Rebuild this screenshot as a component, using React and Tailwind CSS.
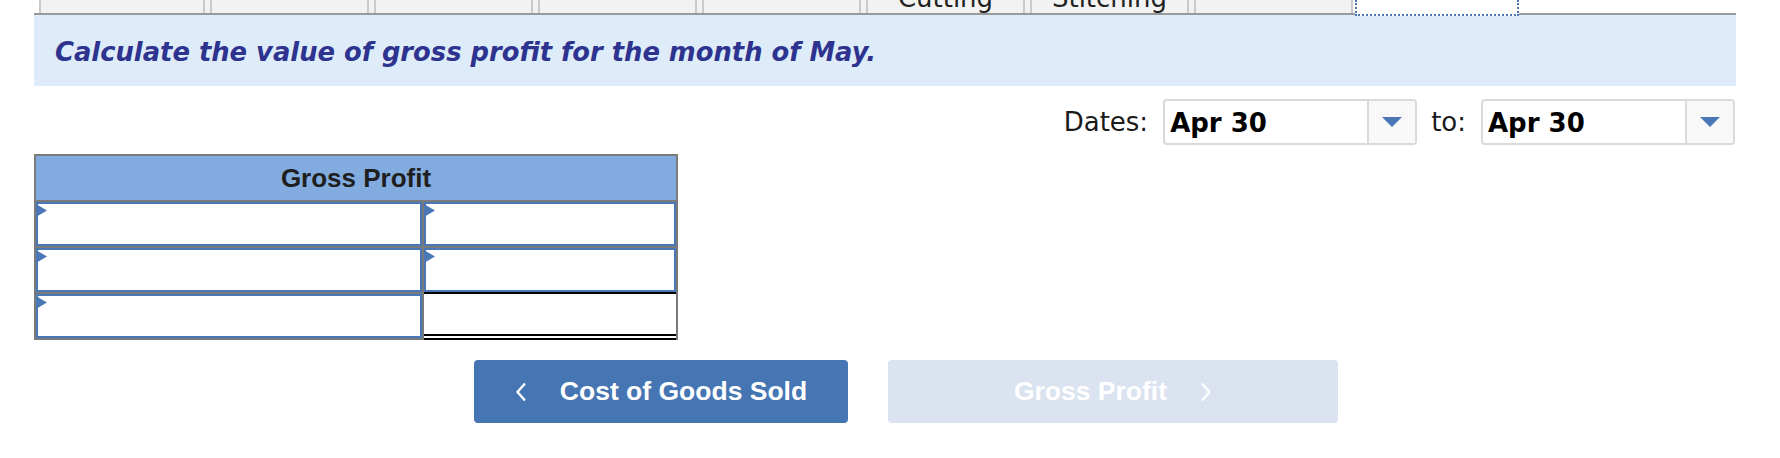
const blueTri = (
  <svg width="11" height="13" viewBox="0 0 11 13" className="absolute -left-[2px] top-0">
    <polygon points="0,0 11,6.5 0,13" fill="#4a78b6" />
  </svg>
);

function InputCell() {
  return (
    <div className="relative bg-white border-2 border-[#4a78b6] h-[44px]">
      {blueTri}
    </div>
  );
}

function Dropdown({ value }) {
  return (
    <div className="flex w-[254px] h-[46px] border-2 border-[#dadada] rounded-[4px] bg-white overflow-hidden">
      <div className="flex-1 flex items-center pl-[5px] pt-[2px] font-['DejaVu_Sans',sans-serif] font-bold text-[26px] text-black">
        {value}
      </div>
      <div className="w-[48px] flex items-center justify-center bg-[#f8f8f8] border-l-2 border-[#dadada]">
        <svg width="20" height="10" viewBox="0 0 20 10">
          <polygon points="0,0 20,0 10,10" fill="#4a78b6" />
        </svg>
      </div>
    </div>
  );
}

export default function App() {
  const tabs = ["", "", "", "", "", "Cutting", "Stitching", ""];

  return (
    <div className="w-[1780px] h-[458px] bg-white">
      <div className="ml-[34px] w-[1702px]">
        {/* Tab strip */}
        <div className="flex h-[15px] border-b-2 border-[#999]">
          <div className="flex gap-[5px] ml-[5px] bg-[#f2f2f2] h-[13px]">
            {tabs.map((t, i) => (
              <div
                key={i}
                className={`${i === 0 ? "w-[166px]" : "w-[159px]"} h-[13px] overflow-hidden border-x-2 border-[#cacaca] flex justify-center`}
              >
                <span className="-mt-[15px] leading-none font-['DejaVu_Sans',sans-serif] text-[26px] text-[#222] whitespace-nowrap">
                  {t}
                </span>
              </div>
            ))}
          </div>
          <div className="relative z-10 ml-[2px] w-[164px] h-[16px] bg-white border-x-2 border-b-2 border-dotted border-[#4a78b6]" />
        </div>

        {/* Instruction banner */}
        <div className="h-[71px] bg-[#deebf8] flex items-center pl-[21px] pt-[3px]">
          <p className="font-['DejaVu_Sans',sans-serif] font-bold italic text-[25.8px] text-[#2d338f]">
            Calculate the value of gross profit for the month of May.
          </p>
        </div>

        {/* Dates */}
        <div className="mt-[13px] flex items-center justify-end pr-[1px] font-['DejaVu_Sans',sans-serif] text-[26px] text-[#1a1a1a]">
          <span className="mr-[15px]">Dates:</span>
          <Dropdown value="Apr 30" />
          <span className="ml-[14px] mr-[15px]">to:</span>
          <Dropdown value="Apr 30" />
        </div>

        {/* Gross profit table */}
        <div className="mt-[9px] w-[644px] grid grid-cols-[386px_252px] gap-[2px] p-[2px] bg-[#7a7a7a]">
          <div className="col-span-2 h-[44px] bg-[#82acdf] flex items-center justify-center font-['Liberation_Sans',Arial,sans-serif] font-bold text-[26px] text-[#1f1f1f]">
            Gross Profit
          </div>
          <InputCell />
          <InputCell />
          <InputCell />
          <InputCell />
          <InputCell />
          <div className="-mt-[2px] -mb-[2px] h-[48px] bg-white border-t-2 border-b-[6px] border-double border-black" />
        </div>

        {/* Navigation buttons */}
        <div className="mt-[20px] ml-[440px] flex gap-[40px] font-['Liberation_Sans',Arial,sans-serif] font-bold text-[26.5px] text-white">
          <button className="w-[374px] h-[63px] rounded-[4px] bg-[#4675b3] flex items-center justify-center gap-[33px]">
            <svg width="12" height="20" viewBox="0 0 12 20">
              <path d="M10 1.5 L2.5 10 L10 18.5" stroke="white" strokeWidth="2.4" fill="none" />
            </svg>
            <span>Cost of Goods Sold</span>
          </button>
          <button className="w-[450px] h-[63px] rounded-[4px] bg-[#dae3ef] flex items-center justify-center gap-[33px]">
            <span>Gross Profit</span>
            <svg width="12" height="20" viewBox="0 0 12 20">
              <path d="M2 1.5 L9.5 10 L2 18.5" stroke="white" strokeWidth="2.4" fill="none" />
            </svg>
          </button>
        </div>
      </div>
    </div>
  );
}
